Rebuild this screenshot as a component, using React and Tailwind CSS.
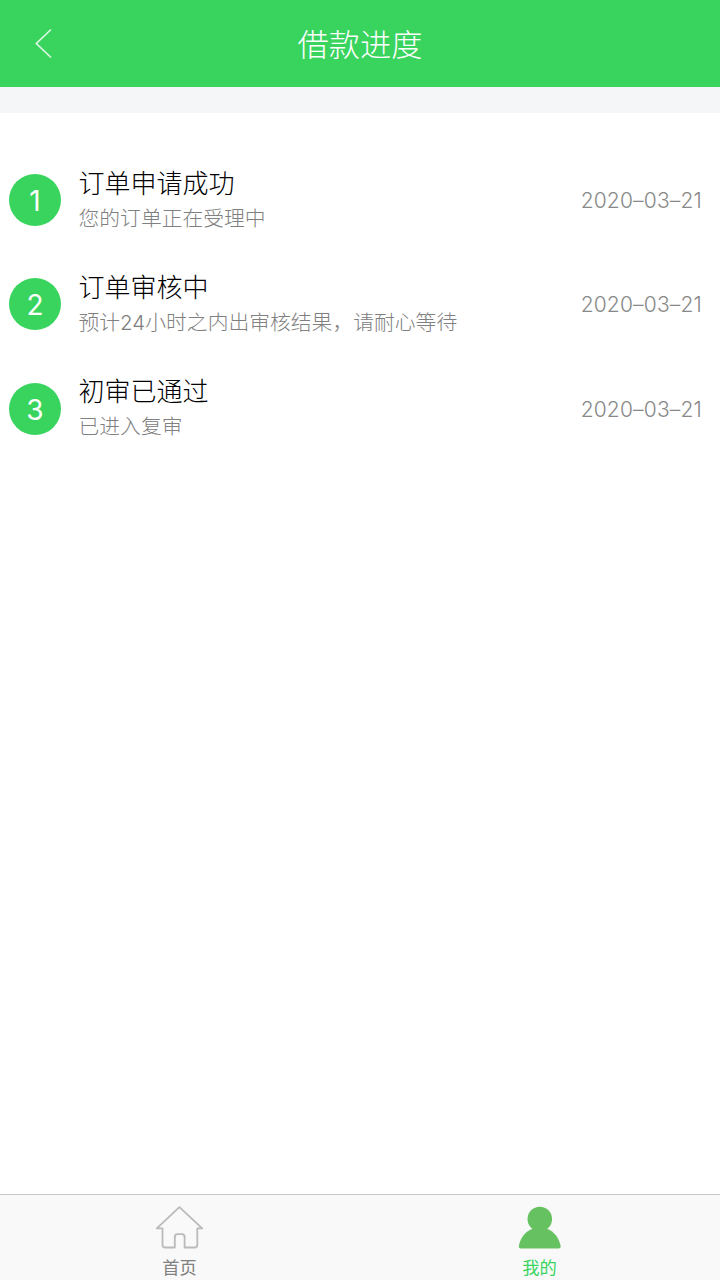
const steps = [
  { title: "订单申请成功", desc: ["您的订单正在受理中"], date: "2020–03–21" },
  { title: "订单审核中", desc: ["预计", "24", "小时之内出审核结果，请耐心等待"], date: "2020–03–21" },
  { title: "初审已通过", desc: ["已进入复审"], date: "2020–03–21" },
];

function Step({ index, title, desc, date }) {
  return (
    <li className="flex h-[104.3px] items-center pr-[18px] pl-[9px]">
      <div className="flex size-[52px] items-center justify-center rounded-full bg-[#39d45e] pt-[2px] font-['Inter',sans-serif] text-[28px] font-normal text-white">
        {index}
      </div>
      <div className="-mt-[2.8px] ml-[17.5px] flex-1">
        <div className="text-[26px] leading-[36px] text-black">{title}</div>
        <div className="text-[20.8px] leading-[34px] text-[#808080]">
          {desc.map((part) =>
            /^\d+$/.test(part) ? (
              <span key={part} className="font-['Inter',sans-serif] text-[20.5px] leading-none font-light">{part}</span>
            ) : (
              part
            )
          )}
        </div>
      </div>
      <div className="pt-[2px] font-['Inter',sans-serif] text-[21px] leading-[30px] font-light tracking-[0.18px] text-[#888]">{date}</div>
    </li>
  );
}

export default function App() {
  return (
    <div className="flex h-[1280px] w-[720px] flex-col bg-white font-['Noto_Sans_CJK_SC',sans-serif] font-light">
      <header className="grid h-[87px] shrink-0 grid-cols-[120px_1fr_120px] items-center bg-[#39d45e] text-white">
        <svg className="ml-[34px] h-[32px] w-[20px]" viewBox="0 0 20 32" fill="none" stroke="currentColor" strokeOpacity="0.85" strokeWidth="1.6">
          <path d="M17 1.5 2.3 15.5 17 29.5" />
        </svg>
        <h1 className="pb-[2px] text-center text-[31.2px] leading-[44px] font-light">借款进度</h1>
      </header>
      <div className="h-[26px] shrink-0 bg-[#f5f6f8]" />
      <main className="flex-1 pt-[35px]">
        <ul>
          {steps.map((s, i) => (
            <Step key={s.title} index={i + 1} {...s} />
          ))}
        </ul>
      </main>
      <nav className="grid h-[86px] shrink-0 grid-cols-2 border-t border-[#c8c8c8] bg-[#f9f9f9] text-[17.3px] font-normal">
        <div className="flex flex-col items-center pt-[10px] text-[#808080]">
          <svg className="h-[45px] w-[48px]" viewBox="0 0 48 45" fill="none" stroke="#bababa" strokeWidth="1.8" strokeLinejoin="round">
            <path d="M23.4 2.2.8 23.3h5.7v16.4q0 2.8 2.8 2.8h9.5V32q0-2.8 2.8-2.8h4.2q2.8 0 2.8 2.8v10.5h9.9q2.8 0 2.8-2.8V23.3h4.9Z" />
          </svg>
          <span className="pr-[1px] leading-[34px]">首页</span>
        </div>
        <div className="flex flex-col items-center pt-[10px] text-[#39d45e]">
          <svg className="h-[45px] w-[48px]" viewBox="0 0 48 45" fill="#66c260">
            <circle cx="23.8" cy="14" r="12.3" />
            <path d="M17 23.5h13.6c7.5 3 12.4 9.3 14 17.3q.4 2.6-2.1 2.6H5q-2.4 0-2.1-2.6C4.4 32.5 9.5 26.2 17 23.5Z" />
          </svg>
          <span className="pr-[1px] leading-[34px]">我的</span>
        </div>
      </nav>
    </div>
  );
}
